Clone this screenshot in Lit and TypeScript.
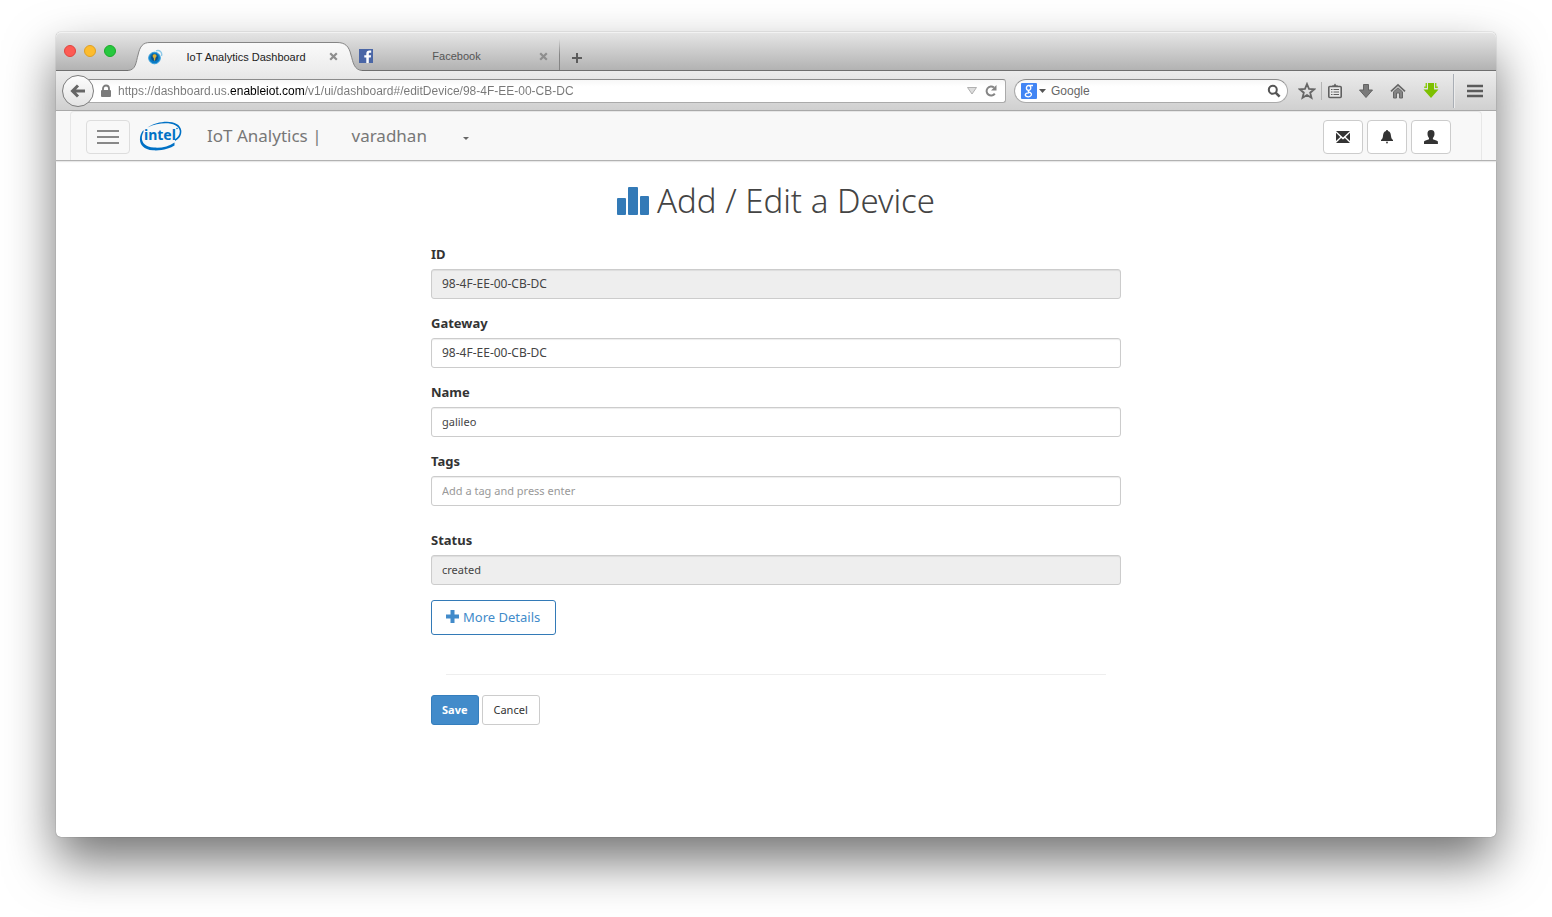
import { LitElement, html, css, svg } from "lit";
import { customElement, state } from "lit/decorators.js";

const closeIcon = svg`<svg width="9" height="9" viewBox="0 0 9 9"><path d="M1.2 1.2 7.8 7.8M7.8 1.2 1.2 7.8" stroke="#8e8e8e" stroke-width="2.2"/></svg>`;

@customElement("browser-tabs")
export class BrowserTabs extends LitElement {
  static styles = css`
    :host { display: block; }
    .strip { display: flex; align-items: stretch; height: 39px; box-sizing: border-box; border-radius: 5px 5px 0 0;
      background: linear-gradient(#e6e6e6, #b1b1b1); box-shadow: inset 0 1px 0 #f2f2f2, inset 0 -1px 0 #6f6f6f; }
    .lights { display: flex; gap: 8px; padding: 13px 12px 0 8px; }
    .light { width: 12px; height: 12px; border-radius: 50%; box-sizing: border-box; border: 1px solid; padding: 0; }
    .red { background: #fd5b54; border-color: #e0443e; }
    .yellow { background: #fdbc2e; border-color: #dfa023; }
    .green { background: #27c83f; border-color: #1aab29; }
    .tab { position: relative; display: grid; grid-template-columns: 16px 1fr 10px; align-items: center; box-sizing: border-box;
      padding-top: 10px; font: 11px/14px "Liberation Sans", Arial, sans-serif; text-align: center; }
    .active { width: 234px; padding-left: 19px; padding-right: 23px; color: #222; }
    .idle { width: 202px; padding-left: 0; padding-right: 10px; color: #555; margin-left: -4px; border-right: 1px solid;
      border-image: linear-gradient(transparent 20%, #858585 60%) 1; margin-bottom: 1px; }
    .shape { position: absolute; left: 0; bottom: 0; }
    .tab > :not(.shape) { position: relative; }
    .tab svg { display: block; }
    .tab .shape { position: absolute; }
    button { border: 0; background: none; padding: 0; }
    .add { align-self: center; padding: 12px 0 0 11px; }
    .add svg { display: block; }
  `;
  render() {
    return html`<div class="strip">
      <div class="lights">
        <button class="light red" aria-label="Close window"></button>
        <button class="light yellow" aria-label="Minimize"></button>
        <button class="light green" aria-label="Zoom"></button>
      </div>
      <div class="tab active">
        <svg class="shape" width="234" height="29" viewBox="0 0 234 29">
          <defs><linearGradient id="g" x2="0" y2="1"><stop stop-color="#fafafa"/><stop offset="1" stop-color="#ececec"/></linearGradient></defs>
          <path d="M0 28.500C8 28 8 20 10 13 12 4 15 .5 22 .5H209C217 .5 221 4 223 13 225 20 226 28 234 28.500V29H0Z" fill="url(#g)"/>
          <path d="M0 28.500C8 28 8 20 10 13 12 4 15 .5 22 .5H209C217 .5 221 4 223 13 225 20 226 28 234 28.500" fill="none" stroke="#858585"/>
        </svg>
        <svg width="16" height="16" viewBox="0 0 16 16">
          <path d="M9 1.800C12.500 .5 15.500 3 14.500 7" fill="none" stroke="#8ec9e8" stroke-width="1.400"/>
          <circle cx="7.500" cy="9" r="5.800" fill="#0b7ac4" stroke="#35a0dd"/>
          <circle cx="7.500" cy="8.400" r="3.400" fill="#0d5088"/>
          <path d="M7.500 5.200c2.400 0 2.600 2.300 1 3.600L8 11.500H7L6.800 9C5 7.500 5.400 5.200 7.500 5.200Z" fill="#d8b13a"/>
        </svg>
        <span>IoT Analytics Dashboard</span>
        <button aria-label="Close tab">${closeIcon}</button>
      </div>
      <div class="tab idle">
        <svg width="16" height="16" viewBox="0 0 16 16">
          <rect x="1" y="1" width="14" height="14" fill="#4a66a6"/>
          <path d="M8.300 15V9.400H6.300V7.200h2V5.700c0-2.100 1.200-3.200 3.100-3.200h1.800v2.200H12c-1 0-1.200.4-1.200 1.200v1.300h2.300l-.3 2.200h-2V15Z" fill="#fff"/>
        </svg>
        <span>Facebook</span>
        <button aria-label="Close tab">${closeIcon}</button>
      </div>
      <button class="add" aria-label="New tab">
        <svg width="12" height="12" viewBox="0 0 12 12"><path d="M6 1v10M1 6h10" stroke="#5c5c5c" stroke-width="2"/></svg>
      </button>
    </div>`;
  }
}

@customElement("browser-toolbar")
export class BrowserToolbar extends LitElement {
  static styles = css`
    :host { display: block; }
    .bar { display: flex; align-items: center; height: 40px; box-sizing: border-box; padding: 0 13px 0 6px;
      background: linear-gradient(#ececec, #d0d0d0); border-bottom: 1px solid #a9a9a9; font: 12px/16px "Liberation Sans", Arial, sans-serif; }
    button { border: 0; background: none; padding: 0; display: grid; place-items: center; flex: none; }
    .back { width: 32px; height: 32px; border-radius: 50%; box-sizing: border-box; border: 1px solid #7d7d7d;
      background: linear-gradient(#fdfdfd, #e4e4e4); z-index: 1; }
    .field { display: flex; align-items: center; height: 24px; box-sizing: border-box; border: 1px solid #aaa; border-top-color: #8b8b8b;
      background: linear-gradient(#f7f7f7, #fff 30%); }
    .url { flex: 1; margin-left: -6px; padding: 0 7px 0 11px; border-radius: 0 3px 3px 0; gap: 6px; }
    .search { width: 274px; margin-left: 8px; border-radius: 12px; padding: 0 6px; box-sizing: border-box; }
    input { flex: 1; min-width: 0; border: 0; outline: 0; padding: 0; font: inherit; background: none; color: #666; }
    .address { background: linear-gradient(90deg, #777 112px, #000 112px 187px, #777 187px); background-clip: text;
      -webkit-background-clip: text; color: transparent; }
    .search input { padding-left: 4px; }
    input::placeholder { color: #666; opacity: 1; }
    .tools { display: flex; align-items: center; padding-left: 10px; }
    .star { width: 18px; }
    .rule { width: 1px; height: 18px; background: #b4b4b4; margin: 0 5px; }
    .list { width: 16px; }
    .down { width: 16px; margin-left: 15px; }
    .home { width: 16px; margin-left: 16px; }
    .get { width: 16px; margin-left: 17px; }
    .tall { width: 1px; height: 34px; background: #a9aeb5; box-shadow: 1px 0 0 #ececec; margin: 0 13px 0 14px; }
  `;
  render() {
    return html`<div class="bar">
      <button class="back" aria-label="Back"><svg width="18" height="18" viewBox="0 0 18 18"><path d="M9 3.500 3.500 9 9 14.500M4 9H16" fill="none" stroke="#666" stroke-width="3"/></svg></button>
      <div class="field url">
        <svg width="12" height="14" viewBox="0 0 12 14"><path d="M3 7V4.500a3 3 0 0 1 6 0V7" fill="none" stroke="#7b7b7b" stroke-width="1.800"/><rect x="1" y="6" width="10" height="7" rx="1" fill="#7b7b7b"/></svg>
        <input class="address" aria-label="Address" value="https://dashboard.us.enableiot.com/v1/ui/dashboard#/editDevice/98-4F-EE-00-CB-DC">
        <button aria-label="History"><svg width="12" height="10" viewBox="0 0 12 10"><path d="M1.500 1.500h9L6 8Z" fill="#ddd" stroke="#b0b0b0"/></svg></button>
        <button aria-label="Reload"><svg width="14" height="14" viewBox="0 0 14 14"><path d="M10.800 9.600A4.500 4.500 0 1 1 10 3.600" fill="none" stroke="#858585" stroke-width="2"/><path d="M12.500 1v5.500H7Z" fill="#858585"/></svg></button>
      </div>
      <div class="field search">
        <svg width="16" height="16" viewBox="0 0 16 16"><rect width="16" height="16" rx="1" fill="#4285f4"/><g fill="none" stroke="#fff" stroke-width="1.300"><ellipse cx="7.600" cy="4.900" rx="2.200" ry="2.400"/><path d="M8.500 2.500H12M8 7.300c-2 1.300.6 1.900 1.600 2.600 1.800 1.300.6 3.900-2 3.900-2.300 0-3.600-1-3.300-2.200.3-1.100 1.600-1.700 3.800-1.700"/></g></svg>
        <svg width="10" height="6" viewBox="0 0 10 6"><path d="M2 1h7L5.500 5Z" fill="#555"/></svg>
        <input aria-label="Search" placeholder="Google">
        <button aria-label="Search"><svg width="14" height="14" viewBox="0 0 14 14"><circle cx="5.800" cy="5.800" r="4" fill="none" stroke="#555" stroke-width="2"/><path d="m8.600 8.600 4 4" stroke="#555" stroke-width="2.600"/></svg></button>
      </div>
      <div class="tools">
        <button class="star" aria-label="Bookmark"><svg width="18" height="18" viewBox="0 0 18 18"><path d="m9 2 2 4.900 5.300.4-4.100 3.400 1.300 5.100L9 13l-4.500 2.800 1.300-5.100L1.700 7.300 7 6.900Z" fill="none" stroke="#666" stroke-width="1.800"/></svg></button>
        <span class="rule"></span>
        <button class="list" aria-label="Bookmarks"><svg width="16" height="16" viewBox="0 0 16 16"><rect x="1.800" y="3.500" width="12.400" height="11" rx="1" fill="#e8e8e8" stroke="#606060" stroke-width="1.600"/><path d="M5 3V2.500h1.500L8 .6l1.500 1.900H11V4H5Z" fill="#606060"/><path d="M4 6.500h1.500M6.500 6.500H12M4 9h1.500M6.500 9H12M4 11.500h1.500M6.500 11.500H12" stroke="#606060" stroke-width="1.200"/></svg></button>
        <button class="down" aria-label="Downloads"><svg width="16" height="16" viewBox="0 0 16 16"><path d="M5.500 1.500h5V7H14.500L8 14.500 1.500 7H5.500Z" fill="#7a7a7a" stroke="#626262"/></svg></button>
        <button class="home" aria-label="Home"><svg width="16" height="16" viewBox="0 0 16 16"><path d="M1 8.300 8 1.800l7 6.500" fill="none" stroke="#666" stroke-width="1.700"/><path d="M3.500 8.800 8 4.800l4.500 4V15H9.500V10h-3v5h-3Z" fill="#858585" stroke="#666"/></svg></button>
        <button class="get" aria-label="Get video"><svg width="16" height="17" viewBox="0 0 16 17"><path d="M5 1h6v6.500H15.500L8 16 .5 7.500H5Z" fill="#7dc000"/><path d="M3.300 1v4.500M12.700 1v4.500M1.200 5.200H4M12 5.200h2.800" stroke="#8bcb10" stroke-width="1.400"/></svg></button>
        <span class="tall"></span>
        <button aria-label="Menu"><svg width="16" height="14" viewBox="0 0 16 14"><path d="M0 2h16M0 7h16M0 12h16" stroke="#5b5b5b" stroke-width="2.600"/></svg></button>
      </div>
    </div>`;
  }
}

@customElement("site-header")
export class SiteHeader extends LitElement {
  static styles = css`
    :host { display: block; }
    .nav { padding: 0 14px; background: #f8f8f8; border-bottom: 1px solid #b2b2b2; box-shadow: 0 1px 1px #e8e8e8; }
    .inner { display: flex; align-items: center; height: 49px; box-sizing: border-box; padding: 2px 30px 0 15px; border: 1px solid #e7e7e7;
      border-bottom: 0; border-radius: 4px 4px 0 0; font: 17px/24px "Noto Sans", "Open Sans", sans-serif; color: #777; }
    button { display: grid; place-items: center; box-sizing: border-box; height: 34px; border: 1px solid #ccc; border-radius: 4px; padding: 0; background: #fff; }
    .menu { width: 44px; border-color: #ddd; background: none; }
    .logo { display: block; margin-left: 9px; padding-bottom: 2px; }
    .brand { margin-left: 24px; padding-bottom: 2px; color: #777; text-decoration: none; }
    .account { display: flex; align-items: center; gap: 35px; border: 0; background: none; margin-left: 30px; padding-bottom: 2px; font: inherit; color: inherit; }
    .account svg { padding-top: 5px; }
    .actions { display: flex; gap: 4px; margin-left: auto; }
    .actions button { width: 40px; }
  `;
  render() {
    return html`<header class="nav"><div class="inner">
      <button class="menu" aria-label="Toggle navigation"><svg width="22" height="16" viewBox="0 0 22 16"><path d="M0 2h22M0 8h22M0 14h22" stroke="#888" stroke-width="2"/></svg></button>
      <svg class="logo" width="44" height="32" viewBox="0 0 44 32" role="img" aria-label="Intel">
        <path d="M8.500 7.500C20-.5 41-1 42.300 10.500 42.800 15.500 39.500 19.500 36 21V19.200C39 17.500 41.200 14.500 40.700 10.800 39.500 2.500 23 .8 8.500 7.500Z" fill="#0071c5"/>
        <path d="M4.500 10C-1.500 17-1 29 14 30.300 23 31 32 28 35.500 25.500V22.500C30 26.500 22 28.300 15 27.600 2.500 26.500 1 18.500 4.500 12Z" fill="#0071c5"/>
        <text x="5" y="20" font-family="Noto Sans, sans-serif" font-size="14" font-weight="700" fill="#0071c5">intel</text>
        <circle cx="38" cy="8.500" r=".8" fill="#0071c5"/>
      </svg>
      <a class="brand" href="#/">IoT Analytics |</a>
      <button class="account">varadhan <svg width="8" height="5" viewBox="0 0 8 5"><path d="M1 1h6L4 4Z" fill="#666"/></svg></button>
      <div class="actions">
        <button aria-label="Messages"><svg width="14" height="12" viewBox="0 0 14 12"><path d="M0 0h14L7 6.500ZM0 1.800 4.300 6 0 10ZM14 1.800 9.700 6 14 10ZM0 12 5.100 6.900 7 8.600 8.900 6.900 14 12Z" fill="#333"/></svg></button>
        <button aria-label="Notifications"><svg width="14" height="14" viewBox="0 0 14 14"><path d="M7 0c.7 0 1 .5 1 1C10.500 1.700 10.800 4 11 6c.2 2 .8 3 2 4v1H1v-1c1.200-1 1.800-2 2-4 .2-2 .5-4.300 3-5 0-.5.3-1 1-1ZM5.800 11.800h2.400L7 14Z" fill="#333"/></svg></button>
        <button aria-label="Profile"><svg width="14" height="14" viewBox="0 0 14 14"><path d="M7 0c2.600 0 3.600 1.600 3.500 4 0 1.800-.8 3.200-1.600 4v1.200c1.500.9 4.100 1.200 5 2.300V14H0v-2.500c.9-1.100 3.500-1.400 5-2.300V8C4.300 7.200 3.500 5.800 3.500 4 3.400 1.600 4.400 0 7 0Z" fill="#333"/></svg></button>
      </div>
    </div></header>`;
  }
}

@customElement("device-form")
export class DeviceForm extends LitElement {
  @state() private fields = [
    { id: "id", label: "ID", value: "98-4F-EE-00-CB-DC", locked: true },
    { id: "gateway", label: "Gateway", value: "98-4F-EE-00-CB-DC" },
    { id: "name", label: "Name", value: "galileo" },
    { id: "tags", label: "Tags", value: "", hint: "Add a tag and press enter" },
    { id: "status", label: "Status", value: "created", locked: true },
  ] as { id: string; label: string; value: string; hint?: string; locked?: boolean }[];

  static styles = css`
    :host { display: block; font-family: "Noto Sans", "Open Sans", sans-serif; color: #333; }
    .page { box-sizing: border-box; width: 50%; margin: 0 auto; padding: 20px 15px; }
    h1 { display: flex; align-items: center; justify-content: center; gap: 8px; margin: 0 0 24px; font: 300 33px/40px "Noto Sans", "Open Sans", sans-serif; color: #444; white-space: nowrap; }
    .group { display: flex; flex-direction: column; gap: 5px; margin-bottom: 15px; }
    .tags { margin-bottom: 25px; }
    label { font-size: 13px; line-height: 19px; font-weight: 700; }
    input { box-sizing: border-box; width: 100%; height: 30px; border: 1px solid #ccc; border-radius: 3px; padding: 0 10px 2px; font: 11px/16px "Noto Sans", "Open Sans", sans-serif;
      color: #444; background: #fff; box-shadow: inset 0 1px 1px rgba(0, 0, 0, 0.075); outline: 0; }
    .id input, .gateway input { font-size: 12px; }
    input[readonly] { background: #eee; }
    input::placeholder { color: #999; opacity: 1; }
    button { box-sizing: border-box; height: 30px; border: 1px solid #ccc; border-radius: 3px; padding: 0 11px; background: #fff; color: #333; font: 11px/16px "Noto Sans", "Open Sans", sans-serif; }
    .more { display: flex; align-items: center; gap: 4px; height: 35px; padding: 0 15px 2px 14px; border-color: #337ab7; color: #428bca; font-size: 13px; }
    hr { margin: 39px 15px 20px; border: 0; border-top: 1px solid #eee; }
    .actions { display: flex; gap: 3px; }
    .save { background: #428bca; border-color: #357ebd; color: #fff; font-weight: 700; padding: 0 10px; }
  `;
  render() {
    return html`<main class="page">
      <h1><svg width="32" height="28" viewBox="0 0 32 28"><g fill="#337ab7"><rect y="11" width="9" height="17" rx="1"/><rect x="11" width="10" height="28" rx="1"/><rect x="23" y="9" width="9" height="19" rx="1"/></g></svg>Add / Edit a Device</h1>
      <form>
        ${this.fields.map((f) => html`<div class="group ${f.id}">
          <label for=${f.id}>${f.label}</label>
          <input id=${f.id} .value=${f.value} placeholder=${f.hint ?? ""} ?readonly=${f.locked}>
        </div>`)}
        <button type="button" class="more"><svg width="13" height="13" viewBox="0 0 13 13"><path d="M6.500 0v13M0 6.500h13" stroke="#428bca" stroke-width="4"/></svg>More Details</button>
        <hr>
        <div class="actions"><button type="button" class="save">Save</button><button type="button">Cancel</button></div>
      </form>
    </main>`;
  }
}

@customElement("app-root")
export class AppRoot extends LitElement {
  static styles = css`
    :host { display: flow-root; background: #fff; min-height: 100vh; overflow: hidden; }
    .window { margin: 32px 56px 80px; min-height: calc(100vh - 112px); border-radius: 5px; background: #fff;
      box-shadow: 0 0 1px rgba(0, 0, 0, 0.6), 0 24px 50px rgba(0, 0, 0, 0.55); }
  `;
  render() {
    return html`<div class="window">
      <browser-tabs></browser-tabs>
      <browser-toolbar></browser-toolbar>
      <site-header></site-header>
      <device-form></device-form>
    </div>`;
  }
}
